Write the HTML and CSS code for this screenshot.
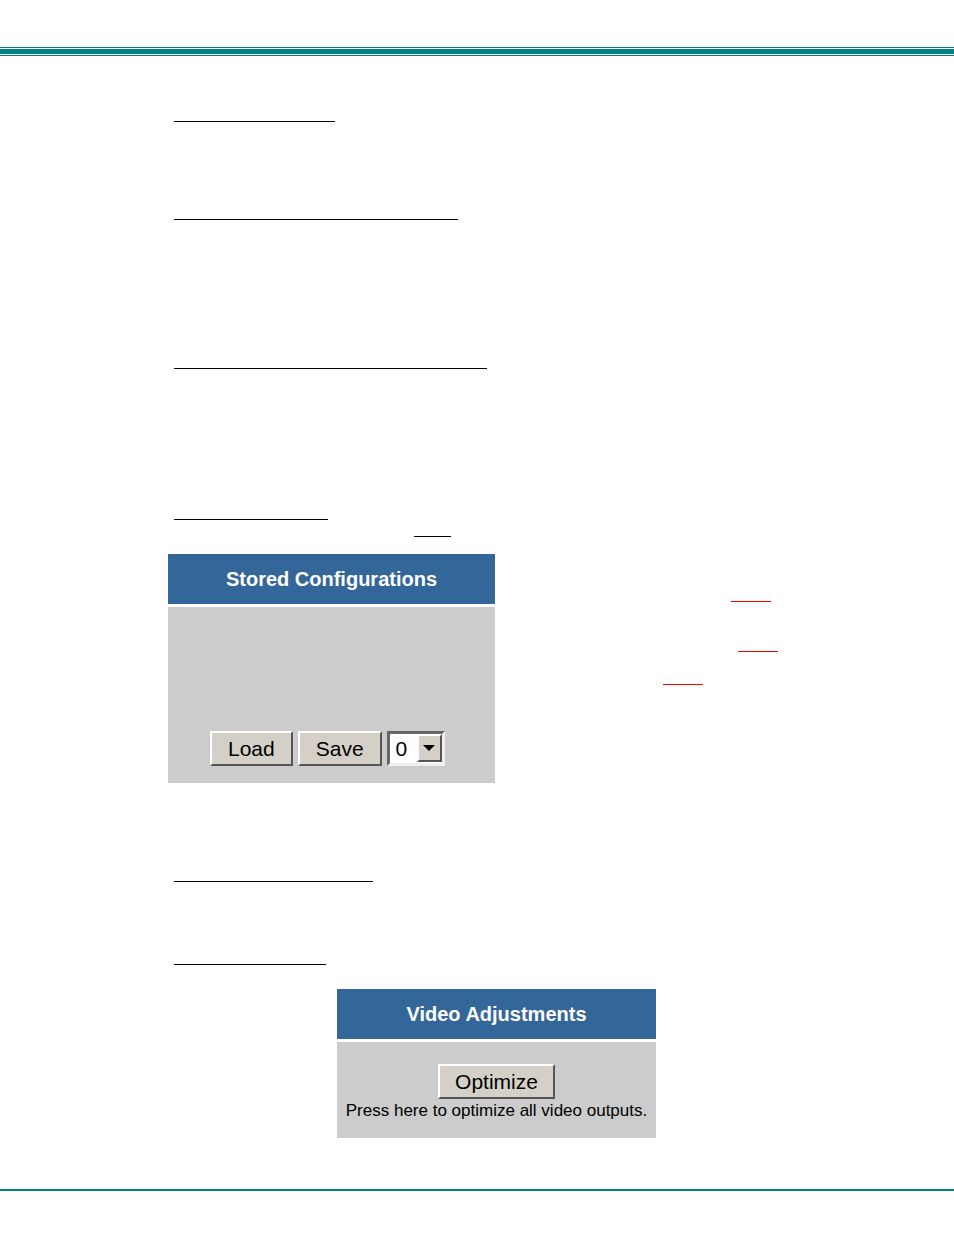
FILE: index.html
```
<!DOCTYPE html>
<html lang="en">
<head>
    <meta charset="UTF-8">
    <meta name="viewport" content="width=device-width, initial-scale=1.0">
    <title>Stored Configurations</title>
    <link rel="stylesheet" href="styles.css">
</head>
<body>
    <header class="top-bar"></header>

    <main class="content">
        <section class="block">
            <div class="rule rule-connect"></div>
        </section>
        <section class="block block-tall">
            <div class="rule rule-routing"></div>
        </section>
        <section class="block block-tall">
            <div class="rule rule-network"></div>
        </section>

        <section class="block-stored">
            <div class="rule rule-stored"></div>
            <div class="rule rule-figure"></div>

            <div class="stored-row">
                <form class="panel">
                    <h2>Stored Configurations</h2>
                    <div class="panel-body controls">
                        <button type="button">Load</button>
                        <button type="button">Save</button>
                        <div class="slot">
                            <select aria-label="Configuration">
                                <option>0</option>
                                <option>1</option>
                                <option>2</option>
                                <option>3</option>
                            </select>
                            <span class="arrow">
                                <svg width="12" height="6" viewBox="0 0 12 6"><path d="M0 0h12L6 6z"/></svg>
                            </span>
                        </div>
                    </div>
                </form>
                <div class="notes">
                    <div class="note note-load"></div>
                    <div class="note note-save"></div>
                    <div class="note note-warning"></div>
                </div>
            </div>
        </section>

        <section class="block-status">
            <div class="rule rule-status"></div>
        </section>

        <section class="block-video">
            <div class="rule rule-video"></div>
            <form class="panel panel-video">
                <h2>Video Adjustments</h2>
                <div class="panel-body">
                    <button type="button">Optimize</button>
                    <p>Press here to optimize all video outputs.</p>
                </div>
            </form>
        </section>
    </main>

    <footer class="bottom-bar"></footer>
</body>
</html>
```
FILE: styles.css
```
* {
    box-sizing: border-box;
}

body {
    margin: 0;
    background-color: #fff;
    font-family: "Liberation Sans", Arial, sans-serif;
}

.top-bar {
    height: 9px;
    margin-top: 47px;
    padding: 1px 0;
    border-top: 1px solid #008080;
    border-bottom: 1px solid #008080;
    background-color: #008080;
    background-clip: content-box;
}

.content {
    padding: 65px 135px 0 174px;
}

.rule {
    height: 1px;
    background-color: #000;
}

.block {
    min-height: 98px;
}

.block-tall {
    min-height: 149px;
}

.block-stored {
    margin-top: 2px;
}

.rule-connect {
    width: 161px;
}

.rule-routing {
    width: 284px;
}

.rule-network {
    width: 313px;
}

.rule-stored {
    width: 154px;
}

.rule-figure {
    width: 37px;
    margin: 16px 0 0 240px;
}

.rule-status {
    width: 199px;
}

.rule-video {
    width: 152px;
}

.stored-row {
    display: flex;
    margin: 17px 0 0 -6px;
}

.panel {
    flex: none;
    width: 327px;
}

.panel h2 {
    height: 50px;
    margin: 0 0 3px;
    color: #fff;
    background-color: #336699;
    font-size: 20px;
    line-height: 50px;
    text-align: center;
}

.panel-body {
    background-color: #ccc;
}

.controls {
    display: flex;
    align-items: flex-end;
    gap: 5px;
    height: 176px;
    padding: 0 0 17px 42px;
}

button {
    height: 35px;
    padding: 0 16px;
    border: 2px solid;
    border-color: #fff #555 #555 #fff;
    background-color: #d4d0c8;
    color: #000;
    font-family: inherit;
    font-size: 21px;
    line-height: 31px;
}

.slot {
    position: relative;
    width: 58px;
    height: 35px;
}

.slot select {
    width: 100%;
    height: 100%;
    padding: 0 0 0 6px;
    border: 3px solid;
    border-color: #666 #eee #eee #666;
    border-radius: 0;
    background-color: #fff;
    color: #000;
    font-family: inherit;
    font-size: 21px;
    appearance: none;
}

.arrow {
    position: absolute;
    top: 3px;
    right: 3px;
    display: flex;
    align-items: center;
    justify-content: center;
    width: 25px;
    height: 28px;
    border: 2px solid;
    border-color: #fff #555 #555 #fff;
    background-color: #d4d0c8;
    pointer-events: none;
}

.notes {
    flex: 1;
    padding-top: 47px;
}

.note {
    width: 40px;
    height: 1px;
    background-color: #f00;
}

.note-load {
    margin-left: 236px;
}

.note-save {
    margin: 49px 0 0 243px;
}

.note-warning {
    margin: 32px 0 0 168px;
}

.block-status {
    min-height: 83px;
    margin-top: 98px;
}

.panel-video {
    width: 319px;
    margin: 24px auto 0;
}

.panel-video .panel-body {
    height: 96px;
    padding-top: 22px;
    text-align: center;
}

.panel-video button {
    padding: 0 15px;
}

.panel-video p {
    margin: 2px 0 0;
    font-size: 17px;
    line-height: 20px;
    white-space: nowrap;
}

.bottom-bar {
    height: 2px;
    margin-top: 51px;
    background-color: #008080;
}
```
